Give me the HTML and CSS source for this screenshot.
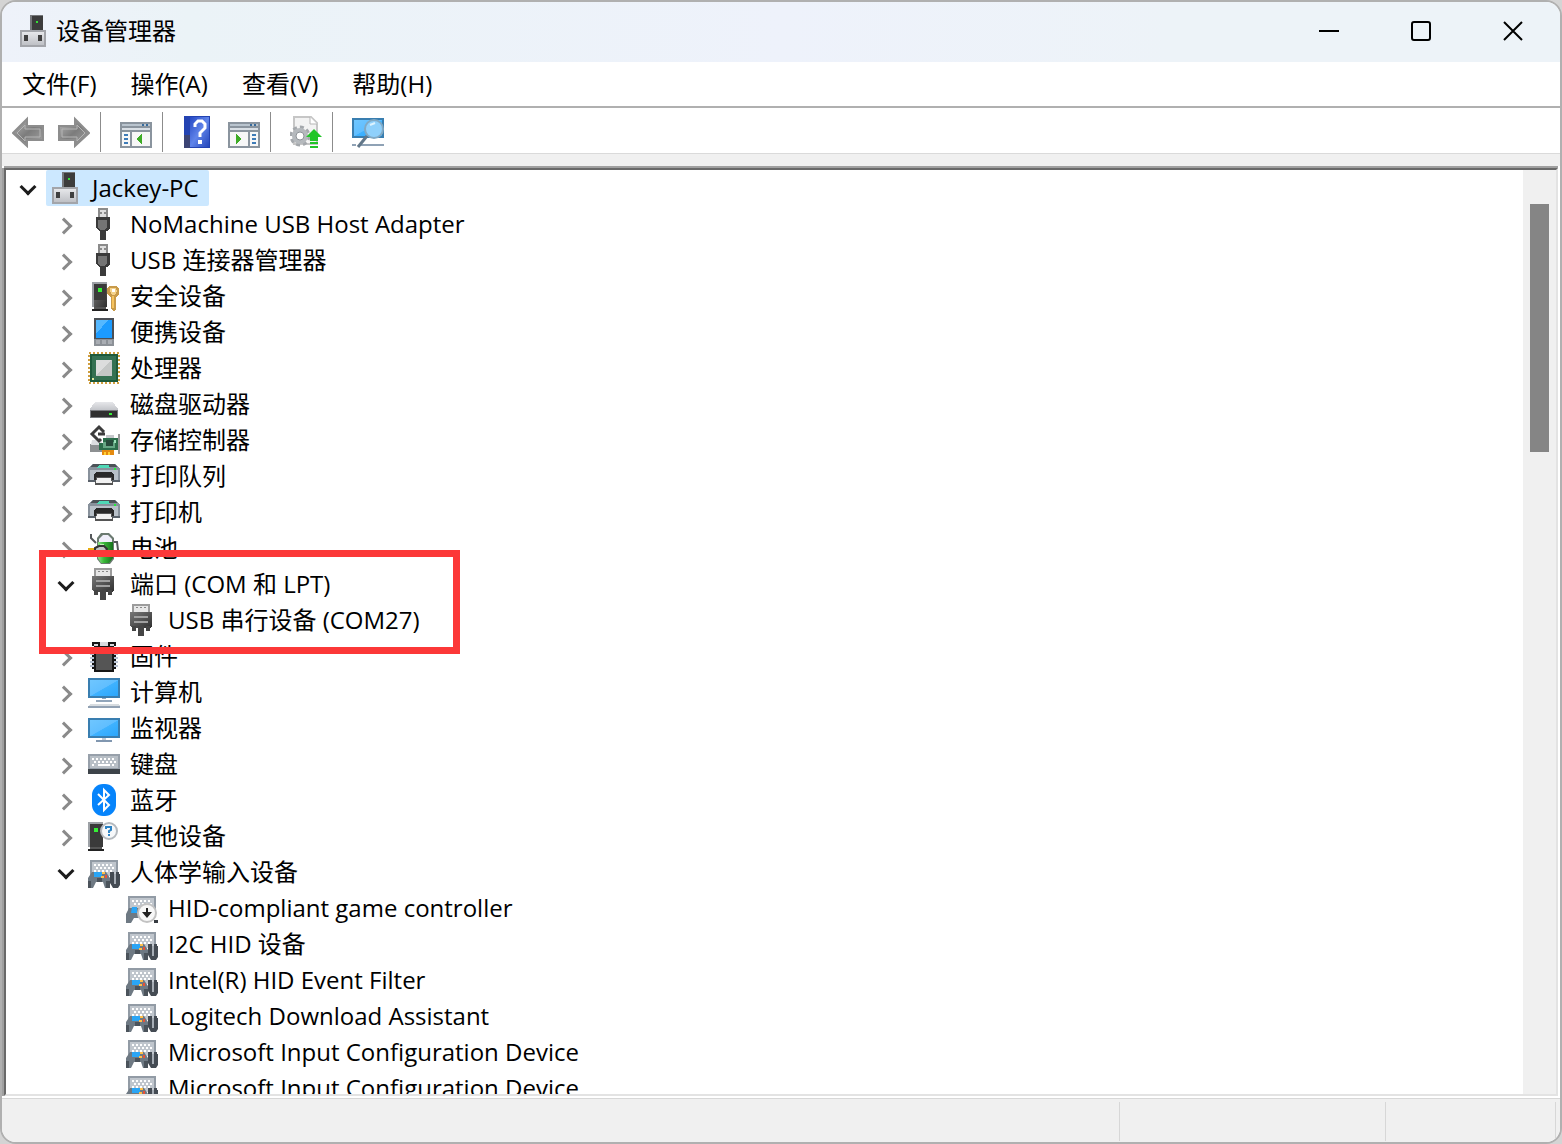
FILE: index.html
```
<!DOCTYPE html>
<html lang="zh-CN">
<head>
  <meta charset="utf-8">
  <title>设备管理器</title>
  <link rel="stylesheet" href="styles.css">
</head>
<body>
  <svg class="sprite" aria-hidden="true">
    <defs>
      <linearGradient id="g-screen" x1="0" y1="0" x2="1" y2="1">
        <stop offset="0" stop-color="#6fc6ff"/><stop offset=".5" stop-color="#60beff"/><stop offset=".52" stop-color="#3fb2ff"/><stop offset="1" stop-color="#2ba6fb"/>
      </linearGradient>
      <linearGradient id="g-arrow" x1="0" y1="0" x2="1" y2="1">
        <stop offset="0" stop-color="#b8b8b8"/><stop offset=".5" stop-color="#7c7c7c"/><stop offset="1" stop-color="#a4a4a4"/>
      </linearGradient>
      <linearGradient id="g-light" x1="0" y1="0" x2="0" y2="1">
        <stop offset="0" stop-color="#e6e7ea"/><stop offset="1" stop-color="#bfc1c6"/>
      </linearGradient>
      <linearGradient id="g-dark" x1="0" y1="0" x2="1" y2="1">
        <stop offset="0" stop-color="#777"/><stop offset="1" stop-color="#303030"/>
      </linearGradient>
      <linearGradient id="g-help" x1="0" y1="0" x2="1" y2="1">
        <stop offset="0" stop-color="#2548c4"/><stop offset=".5" stop-color="#6084ea"/><stop offset="1" stop-color="#2446ba"/>
      </linearGradient>
      <linearGradient id="g-green" x1="0" y1="0" x2="1" y2="0">
        <stop offset="0" stop-color="#8be085"/><stop offset=".4" stop-color="#38b838"/><stop offset="1" stop-color="#17711c"/>
      </linearGradient>
    </defs>

    <symbol id="i-pc" viewBox="0 0 32 32">
      <path d="M12 0h13v17H12z" fill="#76787b"/>
      <path d="M14 1h11v15H14z" fill="#3c3c3c"/>
      <path d="M18 6h2v2h-2z" fill="#34e234"/>
      <path d="M2 15h26v17H2z" fill="#a3a5aa"/>
      <path d="M4 17h22v13H4z" fill="url(#g-light)"/>
      <path d="M6 20h4v6H6zM20 20h4v6h-4z" fill="#404040"/>
    </symbol>
    <symbol id="i-usb" viewBox="0 0 32 32">
      <path d="M10 0h10v10H10z" fill="#8b8b8b"/>
      <path d="M12 2h6v7h-6z" fill="#dedede"/>
      <path d="M12 4h2v2h-2zM16 4h2v2h-2z" fill="#8b8b8b"/>
      <path d="M8 9h14v11l-3 3h-8l-3-3z" fill="#3a3a3a"/>
      <path d="M10 12h9v7l-2 3h-5l-2-3z" fill="#747474"/>
      <path d="M12 23h6v9h-6z" fill="#3b3b3b"/>
    </symbol>
    <symbol id="i-security" viewBox="0 0 32 32">
      <path d="M4 2h15v25H4z" fill="#9da1a6"/>
      <path d="M6 4h13v23H6z" fill="url(#g-dark)"/>
      <path d="M6 4h12v16H6z" fill="#3a3a3a"/>
      <path d="M10 8h4v4h-4z" fill="#35f035"/>
      <path d="M6 27h12v2H6z" fill="#555"/>
      <path d="M4 29h16v2H4z" fill="#222"/>
      <path d="M21 6h8l2 3v5l-3 3v12l-2 2-3-2V17l-4-3V9z" fill="#c89a4a"/>
      <path d="M22 8h6l1 3-2 4h-3l-2-4z" fill="#f4d28b"/>
      <path d="M24 9h3v3h-3z" fill="#fff"/>
      <path d="M24 16h2v12h-2z" fill="#f6c35e"/>
    </symbol>
    <symbol id="i-portable" viewBox="0 0 32 32">
      <path d="M6 2h20v28H6z" fill="#4b4f55"/>
      <path d="M8 4h16v18H8z" fill="#1c9bff"/>
      <path d="M8 4h12L8 18z" fill="#55b8ff"/>
      <path d="M6 23h20v7H6z" fill="#8c9197"/>
      <path d="M8 24h4v4H8zM14 24h4v4h-4zM20 24h4v4h-4z" fill="#a9adb3"/>
    </symbol>
    <symbol id="i-cpu" viewBox="0 0 32 32">
      <rect x="1" y="1" width="30" height="30" fill="none" stroke="#cf9e3f" stroke-width="2" stroke-dasharray="2 2"/>
      <path d="M2 2h28v28H2z" fill="#1d5a3b"/>
      <path d="M4 4h24v24H4z" fill="#347152"/>
      <path d="M8 8h16v16H8z" fill="#c4c7c6"/>
      <path d="M8 8h15L8 23z" fill="#dcdddd"/>
      <path d="M4 26h2v2H4z" fill="#dfe9a0"/>
    </symbol>
    <symbol id="i-disk" viewBox="0 0 32 32">
      <path d="M7 14h18l5 7v2H2v-2z" fill="url(#g-light)"/>
      <path d="M2 22h28v8H2z" fill="#77797d"/>
      <path d="M3 23h26v6H3z" fill="#303030"/>
      <path d="M21 25h3v2h-3z" fill="#37ef37"/>
    </symbol>
    <symbol id="i-storage" viewBox="0 0 32 32">
      <path d="M2 20h12v8H2z" fill="#8d9092"/>
      <path d="M4 16h10v5H3z" fill="#dcdde0"/>
      <path d="M18 11h8v4h-8z" fill="#c6c8cb"/>
      <path d="M16 8l-5-5-7 7 7 7 2-2M10 10h7" fill="none" stroke="#3c3c3c" stroke-width="3"/>
      <path d="M15 14h15v12H11v-7h4z" fill="#2c6d4b"/>
      <path d="M15 18h12v6H15z" fill="#66a684"/>
      <path d="M18 16h7v6h-7z" fill="#274a3b"/>
      <path d="M26 16h2v3h-2z" fill="#9be0b8"/>
      <path d="M30 10h2v20h-2z" fill="#989898"/>
      <path d="M14 26h12v5H14z" fill="#e48a10"/>
      <path d="M16 28h2v3h-2zM20 28h2v3h-2z" fill="#ffcf34"/>
    </symbol>
    <symbol id="i-printer" viewBox="0 0 32 32">
      <path d="M4 4h24l4 5v13H0V9z" fill="#88919b"/>
      <path d="M5 4h22l2 3H3z" fill="#4c5257"/>
      <path d="M11 5h10l1 3H9z" fill="#4fd8b6"/>
      <path d="M2 10h28v10H2z" fill="#b8c0c8"/>
      <path d="M26 8h2v2h-2z" fill="#21ee38"/>
      <path d="M8 12h16l2 3v6H6v-6z" fill="#292929"/>
      <path d="M0 20h32v2H0z" fill="#59616a"/>
      <path d="M8 17h16l1 8H7z" fill="#555"/>
      <path d="M9 18h14l1 5H8z" fill="#f1f1f1"/>
    </symbol>
    <symbol id="i-battery" viewBox="0 0 32 32">
      <path d="M3 2v4l5 5M26 10h3l1 8-5 7" fill="none" stroke="#55585b" stroke-width="2"/>
      <path d="M9 6l4-5h8l5 5v21l-4 5h-9l-4-5z" fill="#6b7a70"/>
      <path d="M11 7l4-4h5l4 4v3H11z" fill="#f0effa"/>
      <path d="M10 10h15v16l-4 5h-8l-3-5z" fill="url(#g-green)"/>
      <path d="M12 12h4v4h-4z" fill="#b9f0ae"/>
      <path d="M0 16h7v3H0z" fill="#e7ad10"/>
      <path d="M7 16l4-2h5l3 3-2 4-6 1-4-3z" fill="#bfc3c2" stroke="#333" stroke-width="2"/>
    </symbol>
    <symbol id="i-port" viewBox="0 0 32 32">
      <path d="M6 0h18v9H6z" fill="#9c9c9c"/>
      <path d="M8 2h14v6H8z" fill="#e7e7e7"/>
      <path d="M10 3h2v1h-2zM14 3h2v1h-2zM18 3h2v1h-2z" fill="#888"/>
      <path d="M4 8h22v14l-2 2H6l-2-2z" fill="url(#g-dark)"/>
      <path d="M8 12h14v2H8zM8 17h14v2H8z" fill="#a0a0a0"/>
      <path d="M6 22h4v5H6zM20 22h4v5h-4zM12 22h6v10h-6z" fill="#454545"/>
    </symbol>
    <symbol id="i-chip" viewBox="0 0 32 32">
      <path d="M2 10h28M2 14h28M2 18h28M2 22h28M2 26h28" stroke="#b9c3d4" stroke-width="2"/>
      <path d="M4 8h24M4 12h24M4 16h24M4 20h24M4 24h24M4 28h24" stroke="#161616" stroke-width="2"/>
      <path d="M6 4h20v28H6z" fill="#161616"/>
      <path d="M4 2h8v4H4zM20 2h8v4h-8z" fill="#161616"/>
      <path d="M6 4h4v2H6zM22 4h4v2h-4zM12 2h8v4h-8z" fill="#d8dade"/>
      <path d="M8 8h16v22H8z" fill="#555"/>
    </symbol>
    <symbol id="i-computer" viewBox="0 0 32 32">
      <path d="M0 2h32v20H0z" fill="#397eb0"/>
      <path d="M2 4h28v16H2z" fill="url(#g-screen)"/>
      <path d="M14 22h4v1h-4zM8 24h16v2H8z" fill="#91a5ba"/>
      <path d="M2 28h28l2 2H0z" fill="#d7dce0"/>
      <path d="M0 30h32v2H0z" fill="#91a1b3"/>
    </symbol>
    <symbol id="i-monitor" viewBox="0 0 32 32">
      <path d="M0 6h32v20H0z" fill="#397eb0"/>
      <path d="M2 8h28v16H2z" fill="url(#g-screen)"/>
      <path d="M14 26h4v2h-4z" fill="#c2cbd5"/>
      <path d="M8 28h16v2H8z" fill="#8197b0"/>
    </symbol>
    <symbol id="i-keyboard" viewBox="0 0 32 32">
      <path d="M0 6h32v16H0z" fill="#97a0aa"/>
      <path d="M2 8h28v12H2z" fill="#b8bfc6"/>
      <path d="M4 11h24M6 14h22M4 17h4M24 17h4" stroke="#fff" stroke-width="2" stroke-dasharray="2 2"/>
      <path d="M10 16h12v2H10z" fill="#fff"/>
      <path d="M0 21h32v5H0z" fill="#3d4349"/>
    </symbol>
    <symbol id="i-bluetooth" viewBox="0 0 32 32">
      <rect x="4" y="0" width="24" height="32" rx="11" fill="#0684fb"/>
      <path d="M10 10l11 11-5 5V6l5 5-11 10" fill="none" stroke="#fff" stroke-width="2"/>
    </symbol>
    <symbol id="i-unknown" viewBox="0 0 32 32">
      <path d="M0 2h15v25H0z" fill="#9da1a6"/>
      <path d="M2 4h13v23H2z" fill="#3a3a3a"/>
      <path d="M6 8h4v4H6z" fill="#35f035"/>
      <path d="M2 27h12v2H2z" fill="#555"/>
      <path d="M0 29h16v2H0z" fill="#222"/>
      <circle cx="21" cy="11" r="8" fill="#f6f8fa" stroke="#b4b9be" stroke-width="2"/>
      <path d="M18 9V7h5v3l-2 1v2" fill="none" stroke="#2d83c4" stroke-width="2"/>
      <path d="M20 14h2v2h-2z" fill="#2d83c4"/>
    </symbol>
    <symbol id="i-hid" viewBox="0 0 32 32">
      <path d="M2 4h28v16H2z" fill="#929ba5"/>
      <path d="M4 6h24v14H4z" fill="#c0c6cd"/>
      <path d="M6 9h20M8 12h18M6 15h20" stroke="#fff" stroke-width="2" stroke-dasharray="2 2"/>
      <path d="M4 16h14l4 6v10h-5l-2-6H8l-3 6H0V22z" fill="#6e7983"/>
      <path d="M0 25h3v7H0zM18 25h4v7h-4zM9 22h5v4H9z" fill="#4b535b"/>
      <path d="M6 16h8v5H6z" fill="#2aa5f5"/>
      <path d="M14 16h3v2h-3zM13 20h3v2h-3z" fill="#ffc04a"/>
      <path d="M17 19h2v3h-2z" fill="#e65238"/>
      <path d="M22 16h4v12h2V16h3v2h1v11l-2 3h-5l-3-5z" fill="#444b53"/>
      <path d="M26 18h2v10h-2z" fill="#a6adb5"/>
    </symbol>
    <symbol id="i-hid-down" viewBox="0 0 32 32">
      <path d="M2 4h28v16H2z" fill="#929ba5"/>
      <path d="M4 6h24v14H4z" fill="#c0c6cd"/>
      <path d="M6 9h20M8 12h18" stroke="#fff" stroke-width="2" stroke-dasharray="2 2"/>
      <path d="M3 16h10v10H8l-3 5H0V22z" fill="#6e7983"/>
      <path d="M6 15h5v6H5z" fill="#2aa5f5"/>
      <path d="M28 28h4v3h-4z" fill="#373c42"/>
      <circle cx="21" cy="21" r="9" fill="#f8f8f8" stroke="#c2c2c2" stroke-width="2"/>
      <path d="M20 16h2v4h4l-5 6-5-6h4z" fill="#222"/>
    </symbol>

    <symbol id="t-back" viewBox="0 0 32 32">
      <path d="M1 17L15 3v7h16v14H15v6z" fill="url(#g-arrow)" stroke="#8d8d8d" stroke-width="2"/>
      <path d="M5 17l8-8v4h15v8H13v4z" fill="none" stroke="#b5b5b5"/>
    </symbol>
    <symbol id="t-forward" viewBox="0 0 32 32">
      <path d="M31 17L17 3v7H1v14h16v6z" fill="url(#g-arrow)" stroke="#8d8d8d" stroke-width="2"/>
      <path d="M27 17l-8-8v4H4v8h15v4z" fill="none" stroke="#b5b5b5"/>
    </symbol>
    <symbol id="t-tree" viewBox="0 0 32 32">
      <path d="M0 6h32v26H0z" fill="#8a949e"/>
      <path d="M2 8h28v2H2z" fill="#b9c4ce"/>
      <path d="M22 8h2v2h-2zM26 8h2v2h-2z" fill="#376b9c"/>
      <path d="M2 12h28v2H2z" fill="#d9dfe5"/>
      <path d="M2 16h8v14H2zM12 16h18v14H12z" fill="#f7f7f7"/>
      <path d="M4 18h4v2H4zM4 22h4v2H4zM4 26h4v2H4z" fill="#3e7cb8"/>
      <path d="M22 18v10l-6-5z" fill="#3eac26"/>
    </symbol>
    <symbol id="t-help" viewBox="0 0 32 32">
      <path d="M2 0h26v32H2z" fill="#2343b2"/>
      <path d="M2 19h6v13H2z" fill="#3c4474"/>
      <path d="M8 1h19v30H8z" fill="url(#g-help)"/>
      <path d="M13 11V8l3-3h4l3 3v4l-5 5v4" fill="none" stroke="#fff" stroke-width="3"/>
      <path d="M16 24h4v4h-4z" fill="#fff"/>
    </symbol>
    <symbol id="t-action" viewBox="0 0 32 32">
      <path d="M0 6h32v26H0z" fill="#8a949e"/>
      <path d="M2 8h28v2H2z" fill="#b9c4ce"/>
      <path d="M22 8h2v2h-2zM26 8h2v2h-2z" fill="#376b9c"/>
      <path d="M2 12h28v2H2z" fill="#d9dfe5"/>
      <path d="M2 16h18v14H2zM22 16h8v14h-8z" fill="#f7f7f7"/>
      <path d="M24 18h4v2h-4zM24 22h4v2h-4zM24 26h4v2h-4z" fill="#3e7cb8"/>
      <path d="M8 18v10l6-5z" fill="#3eac26"/>
    </symbol>
    <symbol id="t-update" viewBox="0 0 32 32">
      <path d="M4 1h17l6 6v21H4z" fill="#f3f3f3" stroke="#c6c6c6" stroke-width="2"/>
      <path d="M20 1v7h7" fill="#fff" stroke="#b5b5b5"/>
      <circle cx="10" cy="20" r="9" fill="none" stroke="#a4a8ac" stroke-width="3" stroke-dasharray="4 3"/>
      <circle cx="10" cy="20" r="6" fill="#fff" stroke="#b5b9bd" stroke-width="4"/>
      <circle cx="10" cy="20" r="4" fill="none" stroke="#8f9499"/>
      <path d="M24 13l8 8h-4v4h-8v-4h-4z" fill="#22c528"/>
      <path d="M20 26h8v2h-8zM20 30h8v2h-8z" fill="#22c528"/>
    </symbol>
    <symbol id="t-scan" viewBox="0 0 32 32">
      <path d="M0 2h32v20H0z" fill="#397eb0"/>
      <path d="M2 4h28v16H2z" fill="url(#g-screen)"/>
      <path d="M8 28h24v2H8zM0 28h4v2H0z" fill="#8fa2b5"/>
      <circle cx="22" cy="13" r="9" fill="#8fd0fb" stroke="#81a9c4" stroke-width="2"/>
      <path d="M15 20L6 31" stroke="#627789" stroke-width="3"/>
      <path d="M18 9l5-2" stroke="#dcf2ff" stroke-width="2"/>
    </symbol>
  </svg>

  <div class="window">
    <header class="titlebar">
      <svg class="icon"><use href="#i-pc"/></svg>
      <h1>设备管理器</h1>
      <div class="window-buttons">
        <button type="button" aria-label="最小化"><svg viewBox="0 0 20 20"><path d="M0 10h20"/></svg></button>
        <button type="button" aria-label="最大化"><svg viewBox="0 0 20 20"><rect x="1" y="1" width="18" height="18" rx="2"/></svg></button>
        <button type="button" aria-label="关闭"><svg viewBox="0 0 20 20"><path d="M1 1l18 18M19 1L1 19"/></svg></button>
      </div>
    </header>

    <nav class="menubar">
      <button type="button">文件(F)</button>
      <button type="button">操作(A)</button>
      <button type="button">查看(V)</button>
      <button type="button">帮助(H)</button>
    </nav>

    <div class="toolbar">
      <div class="tool-group">
        <button type="button" aria-label="后退"><svg class="icon smooth"><use href="#t-back"/></svg></button>
        <button type="button" aria-label="前进"><svg class="icon smooth"><use href="#t-forward"/></svg></button>
      </div>
      <div class="tool-group">
        <button type="button" aria-label="显示/隐藏控制台树"><svg class="icon"><use href="#t-tree"/></svg></button>
      </div>
      <div class="tool-group">
        <button type="button" aria-label="帮助"><svg class="icon smooth"><use href="#t-help"/></svg></button>
        <button type="button" aria-label="显示/隐藏操作窗格"><svg class="icon"><use href="#t-action"/></svg></button>
      </div>
      <div class="tool-group">
        <button type="button" aria-label="更新驱动程序"><svg class="icon smooth"><use href="#t-update"/></svg></button>
      </div>
      <div class="tool-group">
        <button type="button" aria-label="扫描检测硬件改动"><svg class="icon smooth"><use href="#t-scan"/></svg></button>
      </div>
    </div>

    <main class="tree-panel">
      <ul class="tree">
        <li>
          <div class="row root"><button type="button" class="toggle open" aria-label="折叠"></button><span class="item selected"><svg class="icon"><use href="#i-pc"/></svg>Jackey-PC</span></div>
          <ul>
            <li><div class="row"><button type="button" class="toggle" aria-label="展开"></button><span class="item"><svg class="icon"><use href="#i-usb"/></svg>NoMachine USB Host Adapter</span></div></li>
            <li><div class="row"><button type="button" class="toggle" aria-label="展开"></button><span class="item"><svg class="icon"><use href="#i-usb"/></svg>USB 连接器管理器</span></div></li>
            <li><div class="row"><button type="button" class="toggle" aria-label="展开"></button><span class="item"><svg class="icon"><use href="#i-security"/></svg>安全设备</span></div></li>
            <li><div class="row"><button type="button" class="toggle" aria-label="展开"></button><span class="item"><svg class="icon"><use href="#i-portable"/></svg>便携设备</span></div></li>
            <li><div class="row"><button type="button" class="toggle" aria-label="展开"></button><span class="item"><svg class="icon"><use href="#i-cpu"/></svg>处理器</span></div></li>
            <li><div class="row"><button type="button" class="toggle" aria-label="展开"></button><span class="item"><svg class="icon"><use href="#i-disk"/></svg>磁盘驱动器</span></div></li>
            <li><div class="row"><button type="button" class="toggle" aria-label="展开"></button><span class="item"><svg class="icon smooth"><use href="#i-storage"/></svg>存储控制器</span></div></li>
            <li><div class="row"><button type="button" class="toggle" aria-label="展开"></button><span class="item"><svg class="icon"><use href="#i-printer"/></svg>打印队列</span></div></li>
            <li><div class="row"><button type="button" class="toggle" aria-label="展开"></button><span class="item"><svg class="icon"><use href="#i-printer"/></svg>打印机</span></div></li>
            <li><div class="row"><button type="button" class="toggle" aria-label="展开"></button><span class="item"><svg class="icon smooth"><use href="#i-battery"/></svg>电池</span></div></li>
            <li class="marked">
              <div class="row"><button type="button" class="toggle open" aria-label="折叠"></button><span class="item"><svg class="icon"><use href="#i-port"/></svg>端口 (COM 和 LPT)</span></div>
              <ul>
                <li><div class="row leaf"><span class="item"><svg class="icon"><use href="#i-port"/></svg>USB 串行设备 (COM27)</span></div></li>
              </ul>
            </li>
            <li><div class="row"><button type="button" class="toggle" aria-label="展开"></button><span class="item"><svg class="icon"><use href="#i-chip"/></svg>固件</span></div></li>
            <li><div class="row"><button type="button" class="toggle" aria-label="展开"></button><span class="item"><svg class="icon"><use href="#i-computer"/></svg>计算机</span></div></li>
            <li><div class="row"><button type="button" class="toggle" aria-label="展开"></button><span class="item"><svg class="icon"><use href="#i-monitor"/></svg>监视器</span></div></li>
            <li><div class="row"><button type="button" class="toggle" aria-label="展开"></button><span class="item"><svg class="icon"><use href="#i-keyboard"/></svg>键盘</span></div></li>
            <li><div class="row"><button type="button" class="toggle" aria-label="展开"></button><span class="item"><svg class="icon smooth"><use href="#i-bluetooth"/></svg>蓝牙</span></div></li>
            <li><div class="row"><button type="button" class="toggle" aria-label="展开"></button><span class="item"><svg class="icon smooth"><use href="#i-unknown"/></svg>其他设备</span></div></li>
            <li>
              <div class="row"><button type="button" class="toggle open" aria-label="折叠"></button><span class="item"><svg class="icon smooth"><use href="#i-hid"/></svg>人体学输入设备</span></div>
              <ul>
                <li><div class="row leaf"><span class="item"><svg class="icon smooth"><use href="#i-hid-down"/></svg>HID-compliant game controller</span></div></li>
                <li><div class="row leaf"><span class="item"><svg class="icon smooth"><use href="#i-hid"/></svg>I2C HID 设备</span></div></li>
                <li><div class="row leaf"><span class="item"><svg class="icon smooth"><use href="#i-hid"/></svg>Intel(R) HID Event Filter</span></div></li>
                <li><div class="row leaf"><span class="item"><svg class="icon smooth"><use href="#i-hid"/></svg>Logitech Download Assistant</span></div></li>
                <li><div class="row leaf"><span class="item"><svg class="icon smooth"><use href="#i-hid"/></svg>Microsoft Input Configuration Device</span></div></li>
                <li><div class="row leaf"><span class="item"><svg class="icon smooth"><use href="#i-hid"/></svg>Microsoft Input Configuration Device</span></div></li>
              </ul>
            </li>
          </ul>
        </li>
      </ul>
      <div class="scrollbar"><div class="thumb"></div></div>
    </main>

    <footer class="statusbar">
      <span class="main-status"></span>
      <span class="pane"></span>
      <span class="pane small"></span>
    </footer>
  </div>
</body>
</html>
```
FILE: styles.css
```
*,
*::before,
*::after {
  box-sizing: border-box;
}

body {
  margin: 0;
  background-color: #d4d4d4;
  color: #000;
  font-family: "Open Sans", "Noto Sans CJK SC", sans-serif;
  font-size: 24px;
  line-height: 36px;
}

button {
  padding: 0;
  border: none;
  background: none;
  color: inherit;
  font: inherit;
}

.sprite {
  position: absolute;
  width: 0;
  height: 0;
}

.icon {
  display: block;
  flex: none;
  width: 32px;
  height: 32px;
  shape-rendering: crispEdges;
}

.icon.smooth {
  shape-rendering: auto;
}

.window {
  display: flex;
  flex-direction: column;
  height: 100vh;
  border: 2px solid #b0b0b0;
  border-radius: 16px;
  background-color: #fff;
  overflow: hidden;
}

/* title bar */
.titlebar {
  display: flex;
  align-items: center;
  flex: none;
  height: 60px;
  padding: 0 1px 3px 16px;
  background: linear-gradient(90deg, #eef2fa 0, #ebf3f7 12%, #eef2fb 50%, #edf3f8 75%);
}

.titlebar h1 {
  margin: 0 auto 0 6px;
  font-size: 24px;
  font-weight: normal;
}

.window-buttons {
  display: flex;
}

.window-buttons button {
  display: flex;
  align-items: center;
  justify-content: center;
  width: 92px;
  height: 56px;
}

.window-buttons svg {
  width: 20px;
  height: 20px;
  fill: none;
  stroke: #000;
  stroke-width: 2;
}

/* menu */
.menubar {
  display: flex;
  gap: 2px;
  flex: none;
  height: 46px;
  padding-left: 4px;
  border-bottom: 2px solid #b0b0b0;
}

.menubar button {
  padding: 0 16px;
}

/* toolbar */
.toolbar {
  display: flex;
  flex: none;
  height: 46px;
  padding: 4px 0 1px;
  border-bottom: 1px solid #dadada;
}

.tool-group {
  display: flex;
  align-items: center;
  gap: 14px;
  padding: 0 10px 0 19px;
  border-right: 1px solid #8c8c8c;
}

.tool-group:first-child {
  padding-left: 10px;
}

.tool-group:last-child {
  border-right: none;
}

/* device tree */
.tree-panel {
  display: flex;
  flex: 1;
  min-height: 0;
  margin: 14px 2px 0;
  border: 2px solid;
  border-color: #696969 #e3e3e3 #e3e3e3 #696969;
  box-shadow: 0 -2px #a0a0a0, -2px 0 #a0a0a0;
  outline: 12px solid #f0f0f0;
  outline-offset: 2px;
  clip-path: inset(-14px -2px 0 -2px);
}

.tree {
  flex: 1;
  overflow: hidden;
}

.tree,
.tree ul {
  margin: 0;
  padding: 0;
  list-style: none;
}

.row {
  display: flex;
  align-items: center;
  height: 36px;
  padding-left: 40px;
}

.row.root {
  padding-left: 2px;
}

.row.leaf {
  padding-left: 116px;
}

.toggle {
  display: flex;
  align-items: center;
  justify-content: center;
  width: 38px;
  height: 36px;
}

.toggle::before {
  content: "";
  width: 12px;
  height: 12px;
  margin: 4px 3px 0 0;
  border: solid #8a8a8a;
  border-width: 3px 3px 0 0;
  transform: rotate(45deg);
}

.toggle.open::before {
  margin: 0 0 2px 2px;
  border-color: #1c1c1c;
  transform: rotate(135deg);
}

.item {
  display: flex;
  align-items: center;
  gap: 10px;
  height: 36px;
  padding: 0 10px 0 4px;
  white-space: pre;
}

.item.selected {
  border-radius: 2px;
  background-color: #cce8ff;
}

/* red frame around the serial port entries */
.marked {
  position: relative;
}

.marked::after {
  content: "";
  position: absolute;
  z-index: 1;
  top: -16px;
  bottom: -16px;
  left: 33px;
  width: 421px;
  border: 7px solid #fc3838;
}

.scrollbar {
  flex: none;
  width: 33px;
  padding: 34px 7px 0;
  background-color: #f0f0f0;
}

.thumb {
  height: 248px;
  background-color: #858585;
}

/* status bar */
.statusbar {
  display: flex;
  flex: none;
  height: 44px;
  margin-top: 2px;
  padding: 3px 4px 1px 0;
  border-top: 1px solid #d7d7d7;
  background-color: #f0f0f0;
}

.statusbar span {
  border-right: 1px solid #d7d7d7;
}

.main-status {
  flex: 1;
}

.pane {
  width: 266px;
}

.pane.small {
  width: 170px;
}
```
